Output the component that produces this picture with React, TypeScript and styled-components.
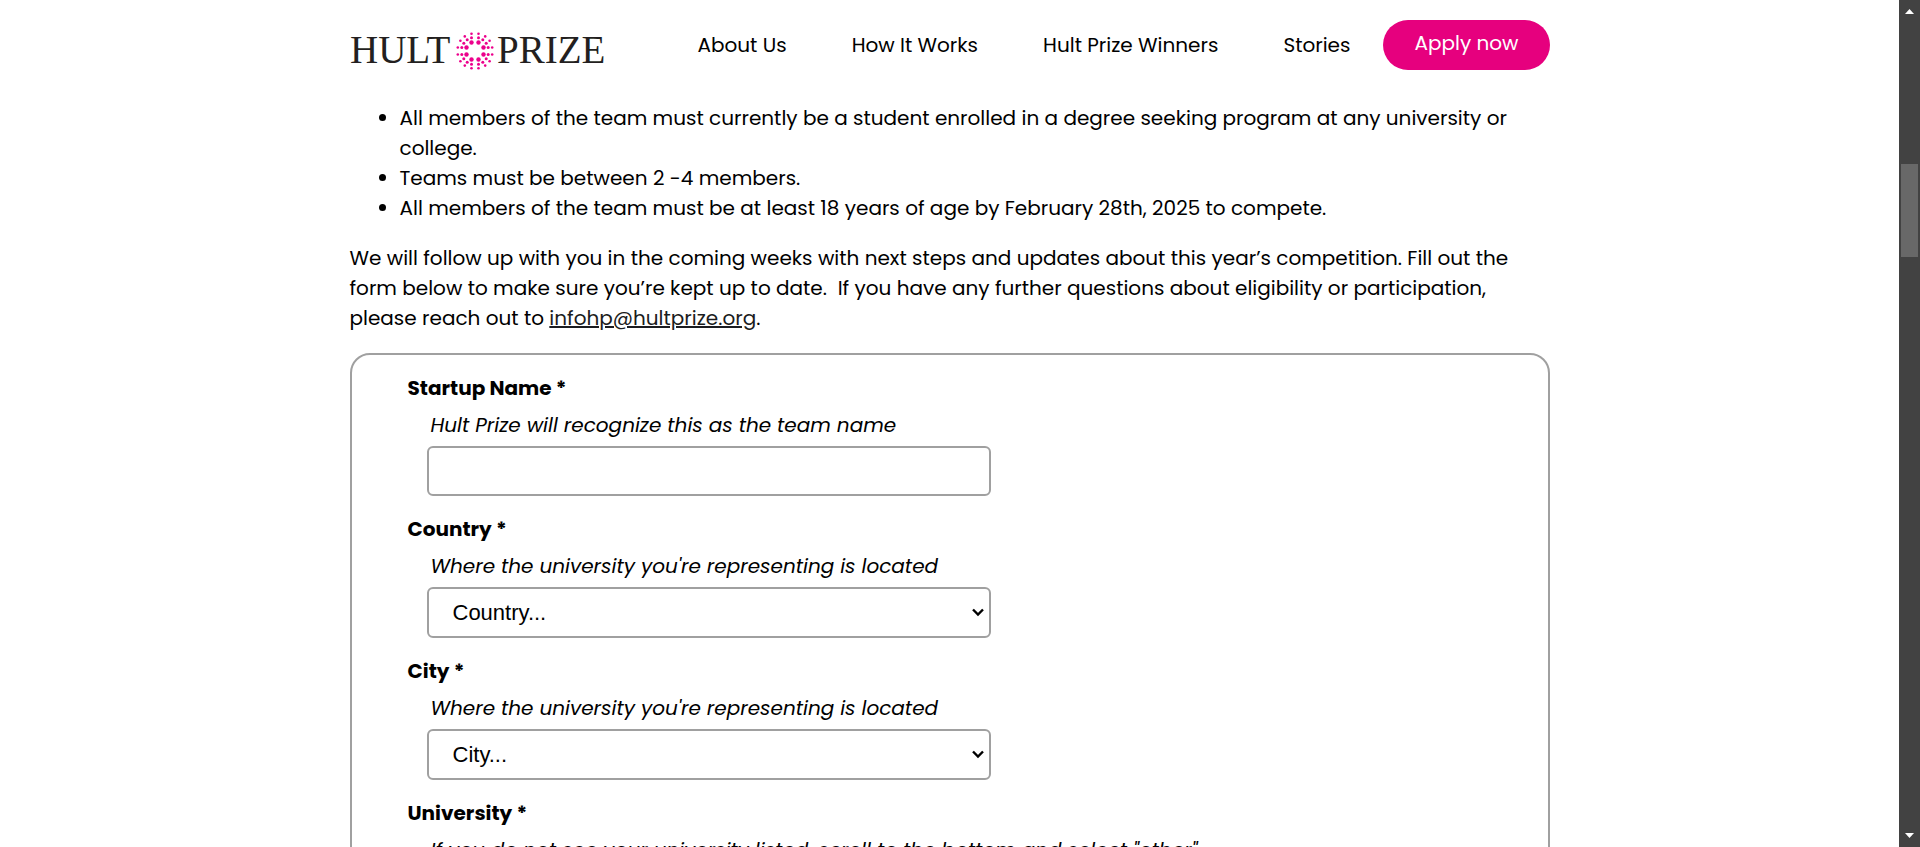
import React from 'react';
import styled, { createGlobalStyle, css } from 'styled-components';

const GlobalStyle = createGlobalStyle`
  *, *::before, *::after { box-sizing: border-box; }
  body {
    margin: 0;
    background: #fff;
    color: #000;
    font-family: Poppins, Inter, sans-serif;
    font-size: 20px;
    line-height: 30px;
  }
`;

const Shell = styled.div`
  display: flex;
  height: 100vh;
  overflow: hidden;
`;

const Page = styled.div`
  flex: 1;
  min-width: 0;
  overflow: hidden;
`;

const Container = styled.div`
  width: 100%;
  max-width: 1200px;
  margin: 0 auto;
`;

const Header = styled(Container).attrs({ as: 'header' })`
  display: flex;
  align-items: center;
  justify-content: space-between;
  height: 90px;
`;

const HomeLink = styled.a`
  display: block;
  line-height: 0;
`;

const Nav = styled.nav`
  display: flex;
  align-items: center;
`;

const NavLink = styled.a`
  padding: 0 33px 0 32px;
  color: #000;
  text-decoration: none;
  white-space: nowrap;
`;

const ApplyButton = styled.button`
  height: 50px;
  padding: 0 31px 4px;
  border: 0;
  border-radius: 25px;
  background: #e6007e;
  color: #fff;
  font: inherit;
  white-space: nowrap;
`;

const Main = styled(Container).attrs({ as: 'main' })`
  padding-top: 13px;
`;

const Rules = styled.ul`
  margin: 0 0 20px;
  padding: 0 0 0 50px;
`;

const Intro = styled.p`
  margin: 0 0 20px;
`;

const MailLink = styled.a`
  color: #1b1c20;
`;

const Form = styled.form`
  display: flex;
  flex-direction: column;
  gap: 18px;
  padding: 18px 56px;
  border: 2px solid #a0a0a0;
  border-radius: 20px;
`;

const FieldRow = styled.div`
  display: flex;
  flex-direction: column;
`;

const Label = styled.label`
  font-weight: 700;
`;

const Hint = styled.div`
  margin: 7px 0 6px;
  padding-left: 23px;
  font-style: italic;
`;

const controlStyle = css`
  width: 100%;
  padding: 0 20px 0 24px;
  border: 2px solid #a0a0a0;
  border-radius: 6px;
  background: #fff;
  color: #000;
  font: 22px "Liberation Sans", Arial, sans-serif;
`;

const Control = styled.div`
  display: grid;
  align-items: center;
  width: 564px;
  max-width: 100%;
  margin-left: 19px;

  > * { grid-area: 1 / 1; }
`;

const TextInput = styled.input`
  ${controlStyle}
  height: 50px;
`;

const Select = styled.select`
  ${controlStyle}
  height: 51px;
  appearance: none;
`;

const Chevron = styled.svg`
  justify-self: end;
  margin-right: 7px;
  pointer-events: none;
  fill: none;
  stroke: #000;
  stroke-width: 2.4;
`;

const ScrollBar = styled.div`
  display: flex;
  flex-direction: column;
  align-items: center;
  flex: 0 0 21px;
  padding: 9px 0;
  background: #424242;
`;

const Thumb = styled.div`
  width: 17px;
  height: 93px;
  margin: 150px 0 auto;
  background: #686868;
`;

const Arrow = styled.svg`
  display: block;
  width: 9px;
  height: 5px;
  fill: #fff;
`;

// One quadrant of the sunburst, as x, y, radius from its centre.
const DOTS = [
  [3.5, 8.5, 2.2],
  [8.5, 3.5, 2.2],
  [3.5, 13.2, 1.5],
  [3.5, 17.2, 1.3],
  [13.2, 3.5, 1.5],
  [17.2, 3.5, 1.3],
  [7.8, 11.2, 1.5],
  [10.2, 14.6, 1.3],
  [11.2, 7.8, 1.5],
  [14.6, 10.2, 1.3],
];

const QUADRANTS = [
  [1, 1],
  [1, -1],
  [-1, 1],
  [-1, -1],
];

function Logo() {
  return (
    <svg width="260" height="54" viewBox="0 0 260 54" role="img" aria-label="Hult Prize">
      <g fill="#231f20" fontFamily="'Liberation Serif', serif" fontSize="39">
        <text x="0" y="45">HULT</text>
        <text x="147" y="45">PRIZE</text>
      </g>
      <g fill="#ec008c" transform="translate(125 33)">
        {QUADRANTS.map(([sx, sy]) =>
          DOTS.map(([x, y, r]) => <circle key={`${sx}${sy}${x}${y}`} cx={x * sx} cy={y * sy} r={r} />)
        )}
      </g>
    </svg>
  );
}

type FieldProps = { id: string; label: string; hint: string; placeholder?: string };

function Field({ id, label, hint, placeholder }: FieldProps) {
  return (
    <FieldRow>
      <Label htmlFor={id}>{label} *</Label>
      <Hint id={`${id}-hint`}>{hint}</Hint>
      <Control>
        {placeholder ? (
          <>
            <Select id={id} aria-describedby={`${id}-hint`}>
              <option>{placeholder}</option>
            </Select>
            <Chevron width="12" height="9" viewBox="0 0 12 9" aria-hidden="true">
              <path d="M1 1.500 6 6.500 11 1.500" />
            </Chevron>
          </>
        ) : (
          <TextInput id={id} type="text" aria-describedby={`${id}-hint`} />
        )}
      </Control>
    </FieldRow>
  );
}

const LINKS = ['About Us', 'How It Works', 'Hult Prize Winners', 'Stories'];

export default function App() {
  return (
    <>
      <GlobalStyle />
      <Shell>
        <Page>
          <Header>
            <HomeLink href="#">
              <Logo />
            </HomeLink>
            <Nav>
              {LINKS.map((text) => (
                <NavLink key={text} href="#">{text}</NavLink>
              ))}
              <ApplyButton type="button">Apply now</ApplyButton>
            </Nav>
          </Header>
          <Main>
            <Rules>
              <li>
                All members of the team must currently be a student enrolled in a degree seeking
                program at any university or college.
              </li>
              <li>Teams must be between 2 -4 members.</li>
              <li>All members of the team must be at least 18 years of age by February 28th, 2025 to compete.</li>
            </Rules>
            <Intro>
              We will follow up with you in the coming weeks with next steps and updates about this
              year’s competition. Fill out the form below to make sure you’re kept up to
              date.&nbsp; If you have any further questions about eligibility or participation,
              please reach out to <MailLink href="mailto:infohp@hultprize.org">infohp@hultprize.org</MailLink>.
            </Intro>
            <Form>
              <Field id="startup" label="Startup Name" hint="Hult Prize will recognize this as the team name" />
              <Field
                id="country"
                label="Country"
                hint="Where the university you're representing is located"
                placeholder="Country..."
              />
              <Field
                id="city"
                label="City"
                hint="Where the university you're representing is located"
                placeholder="City..."
              />
              <Field
                id="university"
                label="University"
                hint={'If you do not see your university listed, scroll to the bottom and select "other"'}
                placeholder="University..."
              />
            </Form>
          </Main>
        </Page>
        <ScrollBar aria-hidden="true">
          <Arrow viewBox="0 0 9 5"><path d="M4.500 0 9 5H0z" /></Arrow>
          <Thumb />
          <Arrow viewBox="0 0 9 5"><path d="M0 0h9L4.500 5z" /></Arrow>
        </ScrollBar>
      </Shell>
    </>
  );
}
